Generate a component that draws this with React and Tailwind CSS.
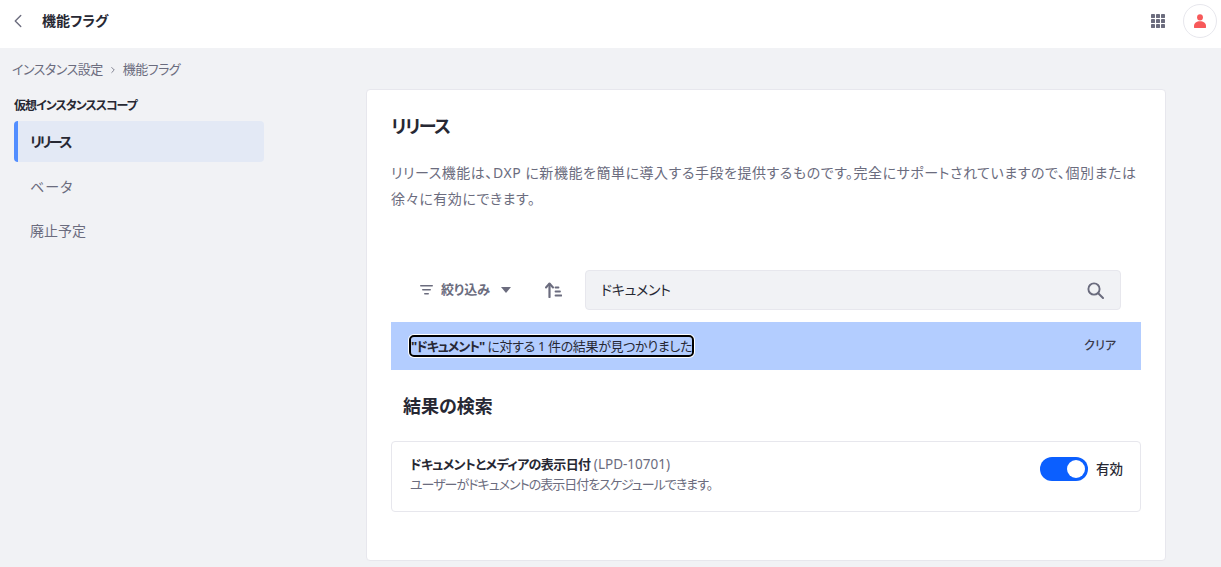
import React from "react";
import { ChevronLeft, ChevronRight } from "lucide-react";

const font = "font-['Noto_Sans','Noto_Sans_CJK_JP',sans-serif] [font-feature-settings:'palt']";

const GridIcon = () => (
  <svg width="14" height="14" viewBox="0 0 14 14" fill="#6b6c7e">
    {[0, 5, 10].map((y) =>
      [0, 5, 10].map((x) => <rect key={`${x}-${y}`} x={x} y={y} width="4" height="4" rx="0.4" />)
    )}
  </svg>
);

const UserIcon = () => (
  <svg width="12" height="14" viewBox="0 0 14 15" fill="#f7595a" preserveAspectRatio="none">
    <circle cx="7" cy="3.6" r="3.4" />
    <path d="M0.8 15 C0 15 0 14 0 13 C0 9.8 3 7.8 7 7.8 C11 7.8 14 9.8 14 13 C14 14 14 15 13.2 15 Z" />
  </svg>
);

const FilterIcon = () => (
  <svg width="13" height="10" viewBox="0 0 13 10" fill="#6b6c7e">
    <rect x="0" y="0" width="13" height="1.6" rx="0.8" />
    <rect x="2" y="4" width="9" height="1.6" rx="0.8" />
    <rect x="4" y="8" width="5" height="1.6" rx="0.8" />
  </svg>
);

const SortIcon = () => (
  <svg width="17" height="16" viewBox="0 0 17 16" fill="none" stroke="#6b6c7e">
    <path d="M4.5 15V2" strokeWidth="2.2" strokeLinecap="round" />
    <path d="M1 5.5L4.5 1.5L8 5.5" strokeWidth="2" strokeLinejoin="round" strokeLinecap="round" />
    <path d="M10.5 5.5H13.5M10.5 9.5H15M10.5 13.5H16.5" strokeWidth="1.8" strokeLinecap="round" />
  </svg>
);

const SearchIcon = () => (
  <svg width="17" height="17" viewBox="0 0 17 17" fill="none" stroke="#6b6c7e">
    <circle cx="7" cy="7" r="5.6" strokeWidth="1.9" />
    <path d="M11.2 11.2L16 16" strokeWidth="2" strokeLinecap="round" />
  </svg>
);

const navItems = [
  { label: "リリース", active: true, extra: "mb-1 tracking-[-2.5px]" },
  { label: "ベータ", extra: "mb-[3px] tracking-[1px]" },
  { label: "廃止予定", extra: "" },
];

const App = () => {
  return (
    <div className={`${font} h-[567px] w-[1221px] overflow-hidden bg-[#f1f2f5] text-[#272833]`}>
      <header className="flex h-12 items-center bg-white pb-[6px] pl-[7px] pr-[4px]">
        <ChevronLeft size={22} strokeWidth={1.5} color="#6b6c7e" />
        <h1 className="ml-[13px] flex-1 text-sm font-bold">機能フラグ</h1>
        <GridIcon />
        <div className="ml-[18px] flex h-[34px] w-[34px] items-center justify-center rounded-full border border-[#e7e7ed] bg-white">
          <UserIcon />
        </div>
      </header>

      <nav className="flex h-[41px] items-center pl-3 pt-[2px] text-[13px] tracking-[-0.5px] text-[#6b6c7e]">
        <span>インスタンス設定</span>
        <ChevronRight size={10} className="mx-[5px]" />
        <span>機能フラグ</span>
      </nav>

      <div className="flex">
        <aside className="ml-[14px] w-[250px]">
          <div className="mt-2 mb-[6px] text-xs font-bold leading-[18px] tracking-[-1px]">仮想インスタンススコープ</div>
          {navItems.map((item) => (
            <a
              key={item.label}
              className={`flex h-[41px] items-center rounded-[4px] border-l-4 pl-3 text-sm ${item.extra} ${
                item.active
                  ? "border-[#528eff] bg-[#e3e9f5] font-bold text-[#272833]"
                  : "border-transparent text-[#6b6c7e]"
              }`}
            >
              {item.label}
            </a>
          ))}
        </aside>

        <main className="ml-[102px] h-[472px] w-[800px] rounded-[4px] border border-[#e7e7ed] bg-white px-6 pt-6">
          <h2 className="text-lg font-bold leading-6 tracking-[-1.5px]">リリース</h2>
          <p className="mt-[22px] text-sm leading-[26px] tracking-[0.54px] text-[#6b6c7e]">
            リリース機能は、DXP に新機能を簡単に導入する手段を提供するものです。完全にサポートされていますので、個別または徐々に有効にできます。
          </p>

          <div className="mt-[58px] flex h-10 items-center">
            <button className="ml-[29px] flex items-center text-[13px] font-bold text-[#6b6c7e]">
              <FilterIcon />
              <span className="ml-2">絞り込み</span>
              <svg className="ml-[11px]" width="10" height="6" viewBox="0 0 10 6" fill="#6b6c7e">
                <path d="M0 0H10L5 6Z" />
              </svg>
            </button>
            <span className="ml-[34px]">
              <SortIcon />
            </span>
            <div className="ml-[23px] flex h-10 w-[536px] items-center justify-between rounded-[4px] border border-[#e7e7ed] bg-[#f1f2f5] pl-[15px] pr-4 text-sm">
              <span className="tracking-[-0.3px]">ドキュメント</span>
              <SearchIcon />
            </div>
          </div>

          <div className="mt-3 flex h-12 w-[750px] items-center justify-between bg-[#b3cdff] pl-5 pr-[25px] text-[13px]">
            <span className="rounded-[3px] outline-2 outline-black shadow-[0_0_0_3px_white] leading-[18px] tracking-[-0.35px]">
              <b className="tracking-[-1px]">"ドキュメント"</b> に対する 1 件の結果が見つかりました
            </span>
            <span className="text-xs font-medium text-[#393a4a]">クリア</span>
          </div>

          <h3 className="ml-3 mt-[24px] text-lg font-bold leading-6">結果の検索</h3>

          <div className="mt-[23px] flex h-[71px] w-[750px] items-start justify-between rounded-[4px] border border-[#e7e7ed] pl-[18px] pr-[17px] pt-[12px]">
            <div className="text-[13px] leading-[20px]">
              <div>
                <b className="text-[#272833] tracking-[-0.6px]">ドキュメントとメディアの表示日付</b>{" "}
                <span className="text-[13.5px] text-[#6b6c7e]">(LPD-10701)</span>
              </div>
              <div className="text-[#6b6c7e] tracking-[-1px]">ユーザーがドキュメントの表示日付をスケジュールできます。</div>
            </div>
            <div className="mt-[3px] flex items-center gap-2 text-[13.5px] font-medium">
              <span className="flex h-6 w-12 items-center justify-end rounded-full bg-[#0b5fff] pr-[3px]">
                <span className="h-[18px] w-[18px] rounded-full bg-white" />
              </span>
              有効
            </div>
          </div>
        </main>
      </div>
    </div>
  );
};

export default App;
